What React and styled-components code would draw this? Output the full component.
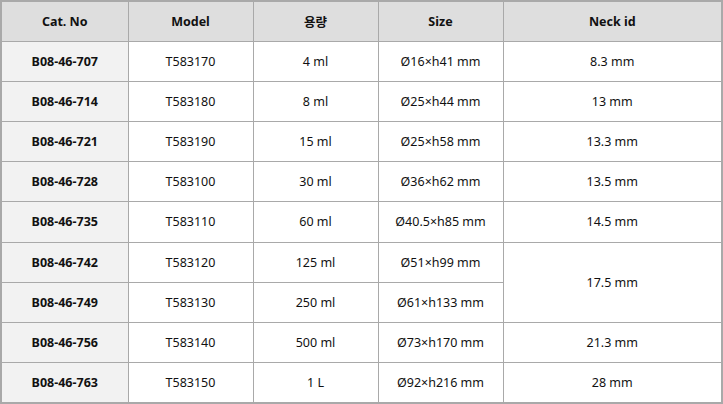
import React from "react";
import styled, { createGlobalStyle } from "styled-components";

const Global = createGlobalStyle`
  html, body { margin: 0; padding: 0; background: #fff; }
  body { font-family: "Noto Sans", "Noto Sans CJK KR", sans-serif; }
`;

const Table = styled.table`
  width: 723px;
  height: 404px;
  border-collapse: collapse;
  border: 2px solid #a9a9a9;
  table-layout: fixed;
  font-size: 12.5px;
  color: #111;
`;

const Th = styled.th`
  background: #dedede;
  border: 1px solid #a9a9a9;
  font-weight: bold;
  height: 39px;
  padding: 0;
  text-align: center;
`;

const Td = styled.td`
  border: 1px solid #a9a9a9;
  height: 39px;
  padding: 0;
  text-align: center;
  background: ${(p) => (p.$cat ? "#f2f2f2" : "#fff")};
  font-weight: ${(p) => (p.$cat ? "bold" : "normal")};
`;

const rows = [
  ["B08-46-707", "T583170", "4 ml", "Ø16×h41 mm", "8.3 mm"],
  ["B08-46-714", "T583180", "8 ml", "Ø25×h44 mm", "13 mm"],
  ["B08-46-721", "T583190", "15 ml", "Ø25×h58 mm", "13.3 mm"],
  ["B08-46-728", "T583100", "30 ml", "Ø36×h62 mm", "13.5 mm"],
  ["B08-46-735", "T583110", "60 ml", "Ø40.5×h85 mm", "14.5 mm"],
  ["B08-46-742", "T583120", "125 ml", "Ø51×h99 mm", "17.5 mm", 2],
  ["B08-46-749", "T583130", "250 ml", "Ø61×h133 mm", null],
  ["B08-46-756", "T583140", "500 ml", "Ø73×h170 mm", "21.3 mm"],
  ["B08-46-763", "T583150", "1 L", "Ø92×h216 mm", "28 mm"],
];

export default function App() {
  return (
    <>
      <Global />
      <Table>
        <colgroup>
          <col style={{ width: 127 }} />
          <col style={{ width: 125 }} />
          <col style={{ width: 125 }} />
          <col style={{ width: 125 }} />
          <col />
        </colgroup>
        <thead>
          <tr>
            <Th>Cat. No</Th>
            <Th>Model</Th>
            <Th>용량</Th>
            <Th>Size</Th>
            <Th>Neck id</Th>
          </tr>
        </thead>
        <tbody>
          {rows.map((r) => (
            <tr key={r[0]}>
              <Td $cat>{r[0]}</Td>
              <Td>{r[1]}</Td>
              <Td>{r[2]}</Td>
              <Td>{r[3]}</Td>
              {r[4] !== null && <Td rowSpan={r[5] || 1}>{r[4]}</Td>}
            </tr>
          ))}
        </tbody>
      </Table>
    </>
  );
}
